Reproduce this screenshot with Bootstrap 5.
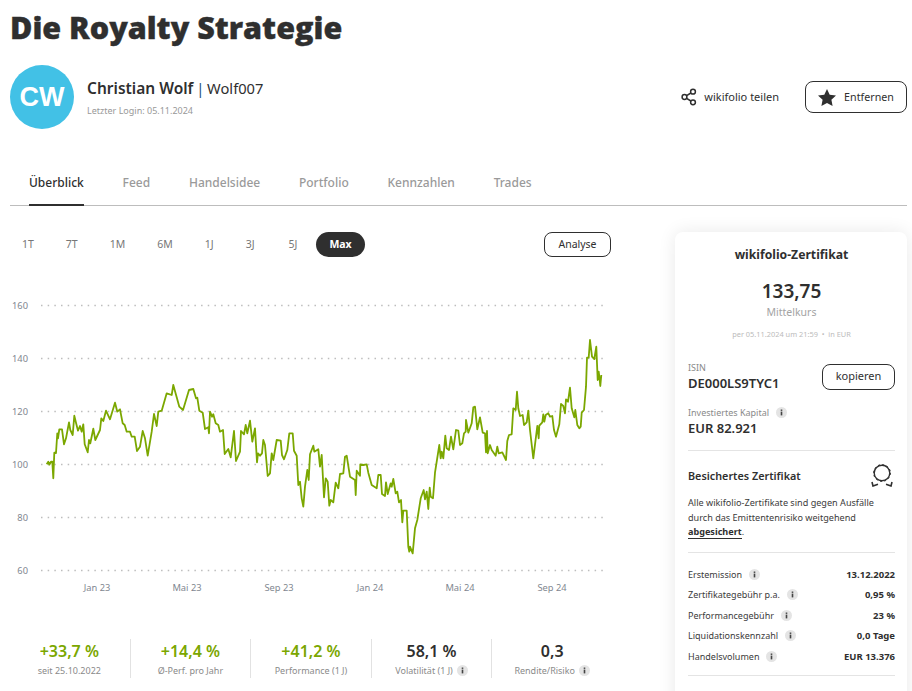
<!DOCTYPE html>
<html lang="de">

<head>
    <meta charset="UTF-8">
    <meta name="viewport" content="width=device-width, initial-scale=1.0">
    <title>Die Royalty Strategie</title>
    <link href="https://cdn.jsdelivr.net/npm/bootstrap@5.3.0/dist/css/bootstrap.min.css" rel="stylesheet">
    <style>
        html, body { height: 691px; overflow: hidden; }
        body { font-family: "Noto Sans", "Open Sans", sans-serif; color: #2f2f2f; font-size: 12px; background: #fff; }
        .page-wrap { padding: 0 5px 0 10px; }
        .page-title { font-family: "Open Sans", sans-serif; font-weight: 800; font-size: 30.5px; line-height: 40px; margin: 7px 0 18px; color: #2f2f2f; -webkit-text-stroke: .4px #2f2f2f; }
        .avatar { width: 64px; height: 64px; border-radius: 50%; background: #42c1e6; color: #fff; font-family: "Liberation Sans", sans-serif; font-weight: 700; font-size: 27px; flex: none; }
        .user-box { margin-left: 13px; }
        .user-name { font-size: 14.7px; line-height: 22px; word-spacing: -1px; }
        .user-name b { font-weight: 600; font-size: 15.5px; word-spacing: 0; }
        .user-sep { color: #24527a; }
        .user-login { font-size: 9px; color: #999; line-height: 14px; margin-top: 5px; }
        .share-link { font-size: 11px; color: #2f2f2f; text-decoration: none; }
        .share-link svg { margin-right: 7px; }
        .btn-outline { border: 1px solid #2f2f2f; border-radius: 8px; background: #fff; color: #2f2f2f; font-size: 10.7px; padding: 0; }
        .btn-fav { width: 102px; height: 32px; margin-left: 26px; }
        .tab-bar { border-bottom: 1px solid #bdbdbd; margin-top: 30px; padding-left: 19px; gap: 38.8px; height: 47px; }
        .tab-bar a { font-size: 12px; font-weight: 500; color: #9a9a9a; text-decoration: none; line-height: 47px; height: 47px; }
        .tab-bar a.is-on { color: #2f2f2f; border-bottom: 2px solid #2f2f2f; }
        .left-col { width: 601px; flex: none; }
        .range-row { margin-top: 26px; }
        .range-list { gap: 6px; }
        .range-btn { font-size: 10.5px; color: #777; padding: 0 13px; height: 25px; line-height: 25px; border-radius: 13px; text-decoration: none; }
        .range-btn.is-on { background: #2f2f2f; color: #fff; font-weight: 700; }
        .range-first { padding-left: 12px; }
        .range-wide { padding-right: 15px; }
        .btn-analyse { width: 67px; height: 25px; font-size: 10.5px; }
        .chart-box { display: block; margin: 0 0 0 -10px; }
        .chart-box text { font-family: "Noto Sans", sans-serif; font-size: 9.3px; fill: #7f8790; }
        .stat-row { width: 603px; margin: 42px 0 0 -1px; }
        .stat-cell { width: 120.6px; height: 39px; text-align: center; border-left: 1px solid #e2e2e2; }
        .stat-cell:first-child { border-left: 0; }
        .stat-val { font-size: 16px; font-weight: 600; line-height: 20px; margin-top: 2px; }
        .stat-val.is-up { color: #7ba700; }
        .stat-lab { font-size: 9px; color: #8a8a8a; line-height: 13px; margin-top: 3px; white-space: nowrap; }
        .stat-lab .info-dot { margin-left: 4px; }
        .cert-box { width: 232px; height: 600px; margin: 26px 0 0 64px; padding: 14px 12px 0 13px; border-radius: 8px; background: #fff; box-shadow: 0 0 18px rgba(0, 0, 0, .09); flex: none; }
        .cert-head { font-size: 12.2px; font-weight: 700; text-align: center; line-height: 17px; }
        .cert-price { font-size: 19px; font-weight: 600; text-align: center; line-height: 24px; margin-top: 16px; }
        .cert-mid { font-size: 10.5px; color: #a3a3a3; text-align: center; line-height: 15px; margin-top: 2px; }
        .cert-per { font-size: 7.4px; color: #bbb; text-align: center; line-height: 12px; margin-top: 8px; }
        .cert-isin { margin-top: 21px; }
        .cert-lab { font-size: 9px; color: #8a8a8a; line-height: 13px; }
        .cert-lab-gap { margin-top: 14px; }
        .cert-val { font-size: 13px; font-weight: 600; line-height: 18px; }
        .btn-copy { width: 73px; height: 26px; font-size: 11px; }
        .cert-line { border-top: 1px solid #e4e4e4; margin-top: 13px; }
        .cert-line-b { margin-top: 12px; }
        .cert-line-c { margin-top: 8px; }
        .cert-safe { margin-top: 12px; }
        .cert-safe svg { margin-right: 2px; }
        .cert-sub { font-size: 10.8px; font-weight: 600; line-height: 15px; }
        .cert-text { font-size: 9.1px; line-height: 14.5px; margin-top: 9px; color: #3b3b3b; }
        .cert-text a { color: #2f2f2f; font-weight: 700; text-decoration: none; border-bottom: 1px solid #2f2f2f; }
        .fact-row { font-size: 9px; line-height: 20.6px; color: #3b3b3b; }
        .fact-row b { font-weight: 700; font-size: 9.5px; color: #2f2f2f; }
        .info-dot { display: inline-block; width: 11px; height: 11px; margin-left: 7px; vertical-align: -2px; }
    </style>
</head>

<body>
    <svg width="0" height="0" class="d-block position-absolute">
        <symbol id="info" viewBox="0 0 11 11">
            <circle cx="5.5" cy="5.5" r="5.5" fill="#e4e4e4"></circle>
            <rect x="4.7" y="4.6" width="1.6" height="3.8" fill="#444"></rect>
            <rect x="4.7" y="2.5" width="1.6" height="1.4" fill="#444"></rect>
        </symbol>
    </svg>

    <div class="page-wrap">
        <h1 class="page-title">Die Royalty Strategie</h1>

        <div class="d-flex align-items-center">
            <div class="avatar d-flex align-items-center justify-content-center">CW</div>
            <div class="user-box flex-grow-1">
                <div class="user-name"><b>Christian Wolf</b> <span class="user-sep">|</span> Wolf007</div>
                <div class="user-login">Letzter Login: 05.11.2024</div>
            </div>
            <a href="#" class="share-link d-flex align-items-center">
                <svg width="16" height="18" viewBox="0 0 16 18" fill="none" stroke="#2f2f2f" stroke-width="1.5">
                    <circle cx="3.5" cy="9" r="2.4"></circle>
                    <circle cx="12" cy="3.7" r="2.4"></circle>
                    <circle cx="12" cy="14.3" r="2.4"></circle>
                    <path d="M5.6 7.7 9.9 5M5.6 10.3 9.9 13"></path>
                </svg>
                wikifolio teilen
            </a>
            <button class="btn-outline btn-fav d-flex align-items-center justify-content-center">
                <svg width="18" height="17" viewBox="0 0 18 17" fill="#2f2f2f" class="me-2">
                    <path d="M9 0l2.7 5.7 6.3.8-4.6 4.3 1.2 6.2L9 14l-5.6 3 1.2-6.2L0 6.5l6.3-.8z"></path>
                </svg>
                Entfernen
            </button>
        </div>

        <div class="tab-bar d-flex">
            <a href="#" class="is-on">Überblick</a>
            <a href="#">Feed</a>
            <a href="#">Handelsidee</a>
            <a href="#">Portfolio</a>
            <a href="#">Kennzahlen</a>
            <a href="#">Trades</a>
        </div>

        <div class="d-flex">
            <div class="left-col">
                <div class="range-row d-flex align-items-center">
                    <div class="range-list d-flex flex-grow-1">
                        <a href="#" class="range-btn range-first">1T</a>
                        <a href="#" class="range-btn">7T</a>
                        <a href="#" class="range-btn">1M</a>
                        <a href="#" class="range-btn">6M</a>
                        <a href="#" class="range-btn">1J</a>
                        <a href="#" class="range-btn range-wide">3J</a>
                        <a href="#" class="range-btn">5J</a>
                        <a href="#" class="range-btn is-on">Max</a>
                    </div>
                    <button class="btn-outline btn-analyse">Analyse</button>
                </div>

                <svg class="chart-box" id="chart" width="612" height="340" viewBox="0 257 612 340"></svg>

                <div class="stat-row d-flex">
                    <div class="stat-cell"><div class="stat-val is-up">+33,7 %</div><div class="stat-lab">seit 25.10.2022</div></div>
                    <div class="stat-cell"><div class="stat-val is-up">+14,4 %</div><div class="stat-lab">Ø-Perf. pro Jahr</div></div>
                    <div class="stat-cell"><div class="stat-val is-up">+41,2 %</div><div class="stat-lab">Performance (1 J)</div></div>
                    <div class="stat-cell"><div class="stat-val">58,1 %</div><div class="stat-lab">Volatilität (1 J)<svg class="info-dot"><use href="#info"></use></svg></div></div>
                    <div class="stat-cell"><div class="stat-val">0,3</div><div class="stat-lab">Rendite/Risiko<svg class="info-dot"><use href="#info"></use></svg></div></div>
                </div>
            </div>

            <div class="cert-box">
                <div class="cert-head">wikifolio-Zertifikat</div>
                <div class="cert-price">133,75</div>
                <div class="cert-mid">Mittelkurs</div>
                <div class="cert-per">per 05.11.2024 um 21:59 &nbsp;•&nbsp; in EUR</div>

                <div class="cert-isin d-flex justify-content-between align-items-center">
                    <div>
                        <div class="cert-lab">ISIN</div>
                        <div class="cert-val">DE000LS9TYC1</div>
                    </div>
                    <button class="btn-outline btn-copy">kopieren</button>
                </div>
                <div class="cert-lab cert-lab-gap">Investiertes Kapital<svg class="info-dot"><use href="#info"></use></svg></div>
                <div class="cert-val">EUR 82.921</div>

                <div class="cert-line"></div>

                <div class="cert-safe d-flex justify-content-between align-items-center">
                    <div class="cert-sub">Besichertes Zertifikat</div>
                    <svg width="22" height="24" viewBox="0 0 22 24" fill="none" stroke="#2f2f2f">
                        <circle cx="11" cy="10" r="7.8" stroke-width="1.4"></circle>
                        <circle cx="11" cy="10" r="8.4" stroke-width="1" stroke-dasharray="2 2.4"></circle>
                        <path d="M1 19l1 4 5-1.800M21 19l-1 4-5-1.800" stroke-width="1.6"></path>
                    </svg>
                </div>
                <div class="cert-text">Alle wikifolio-Zertifikate sind gegen Ausfälle durch das Emittentenrisiko weitgehend <a href="#">abgesichert</a>.</div>

                <div class="cert-line cert-line-b"></div>

                <div class="mt-2 pt-1">
                    <div class="fact-row d-flex justify-content-between"><span>Erstemission<svg class="info-dot"><use href="#info"></use></svg></span><b>13.12.2022</b></div>
                    <div class="fact-row d-flex justify-content-between"><span>Zertifikategebühr p.a.<svg class="info-dot"><use href="#info"></use></svg></span><b>0,95 %</b></div>
                    <div class="fact-row d-flex justify-content-between"><span>Performancegebühr<svg class="info-dot"><use href="#info"></use></svg></span><b>23 %</b></div>
                    <div class="fact-row d-flex justify-content-between"><span>Liquidationskennzahl<svg class="info-dot"><use href="#info"></use></svg></span><b>0,0 Tage</b></div>
                    <div class="fact-row d-flex justify-content-between"><span>Handelsvolumen<svg class="info-dot"><use href="#info"></use></svg></span><b>EUR 13.376</b></div>
                </div>

                <div class="cert-line cert-line-c"></div>
            </div>
        </div>
    </div>

    <script>
        // chart data traced from the reference, in 3x crop coordinates
        const partA = [140,523,145,515,148,524,153,515,157,515,160,565,163,488,168,489,172,430,174,445,178,418,186,418,192,463,198,445,207,397,211,420,218,435,223,377,228,398,234,422,240,408,245,425,250,403,254,463,263,487,267,450,271,460,280,416,286,450,300,420,304,385,310,393,318,362,330,388,345,338,352,365,360,358,368,400,374,405,380,425,390,425,395,440,404,440,411,483,420,470,428,423,435,445,443,497,455,425,462,372,470,408,475,365,485,362,500,310,515,315,520,285,530,322,538,350,549,360,553,347,567,300,580,297,588,325,592,323,598,362,608,368,615,417,625,412,627,430,630,365,636,380,640,373,647,400,655,405,660,425,669,420,674,492,685,477,692,502,702,423,708,513,720,485,723,423,732,433,737,405,742,430,750,392,757,455,765,415,771,517,774,490,780,497,786,490,790,450,795,465,803,558,810,550,815,490,820,510,830,450,842,452,846,495,852,508,862,480,868,430,878,430,882,482,890,497,895,585];
        const partB = [0,575,5,625,10,650,15,590,22,540,26,570,30,493,40,467,43,485,55,478,60,530,65,495,72,622,77,565,83,575,88,647,92,630,100,637,107,578,115,595,120,552,130,550,135,500,140,497,150,560,165,570,167,615,170,542,180,557,181,523,190,525,200,523,205,548,215,585,230,595,235,555,242,555,246,612,255,618,258,577,263,612,272,580,275,590,280,567,287,610,292,605,297,637,303,630,307,697,310,662,320,662,325,770,328,785,330,770,338,790,345,715,352,690,362,625,371,600,375,628,380,605,385,657,389,593,392,620,399,625,405,548,418,465,422,505,425,485,430,505,436,437,440,475,447,480,453,440,460,478,468,420,475,422,480,465,487,460,492,430,497,425,498,390,505,428,515,400,520,352,525,350,532,418,540,382,548,428,555,430,558,487,561,423,563,490,570,465,575,480,587,497,592,470,596,490,607,487,618,510,622,453,627,435,635,433,640,355,647,360,651,305,655,355,660,378,668,375,672,405,680,397,685,362,690,420,700,505,712,408,716,445,718,407,727,397,730,373,733,395,737,375,745,370,750,380,757,378,762,420,768,440,778,403,783,342,790,348,795,370,798,328,804,335,810,293,815,355,823,382,826,360,832,405,838,415,842,410,845,368,852,360,858,290,861,203,866,203,870,150,876,200,883,207,889,170,893,270,896,245,899,270,901,288,904,255];

        function toPoints(list, offsetX) {
            const out = [];
            for (let i = 0; i < list.length; i += 2) {
                out.push((offsetX + list[i] / 3).toFixed(1) + ',' + (290 + list[i + 1] / 3).toFixed(1));
            }
            return out;
        }

        let html = '';
        [[160, 305.5], [140, 358.5], [120, 411.5], [100, 464.5], [80, 517.5], [60, 570.5]].forEach(([label, y]) => {
            html += `<line x1="41" x2="607" y1="${y}" y2="${y}" stroke="#bdbdbd" stroke-width="1.5" stroke-dasharray="1.5 5.17"></line>`;
            html += `<text x="28" y="${y + 3}" text-anchor="end">${label}</text>`;
        });
        [['Jan 23', 97], ['Mai 23', 187], ['Sep 23', 279], ['Jan 24', 370], ['Mai 24', 460], ['Sep 24', 552]].forEach(([label, x]) => {
            html += `<text x="${x}" y="591" text-anchor="middle">${label}</text>`;
        });
        const pts = toPoints(partA, 0).concat(toPoints(partB, 300));
        html += `<polyline points="${pts.join(' ')}" fill="none" stroke="#7ba700" stroke-width="1.8" stroke-linejoin="round"></polyline>`;
        document.getElementById('chart').innerHTML = html;
    </script>
    <script src="https://cdn.jsdelivr.net/npm/bootstrap@5.3.0/dist/js/bootstrap.bundle.min.js"></script>
</body>

</html>
